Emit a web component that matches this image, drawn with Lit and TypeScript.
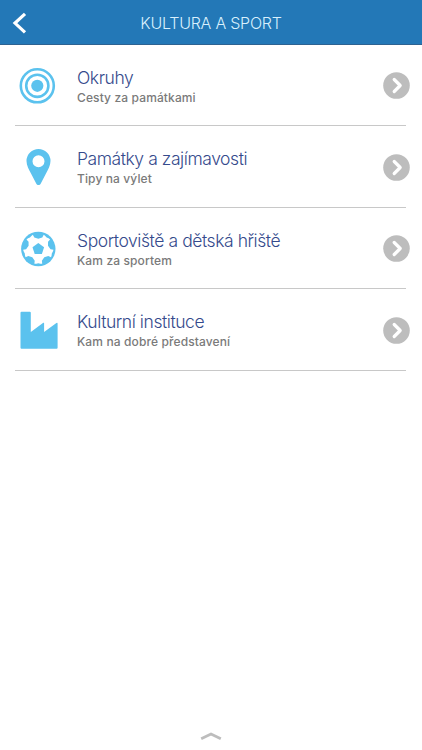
import { LitElement, html, css, svg } from "lit";
import { customElement } from "lit/decorators.js";

type Polar = [angle: number, radius: number];

// Repeats a set of polar points five times around a centre, first one pointing up.
const fivefold = (cx: number, cy: number, points: Polar[]) =>
  [0, 72, 144, 216, 288]
    .flatMap((turn) =>
      points.map(([angle, r]) => {
        const a = ((turn + angle - 90) * Math.PI) / 180;
        return `${(cx + r * Math.cos(a)).toFixed(2)},${(cy + r * Math.sin(a)).toFixed(2)}`;
      })
    )
    .join(" ");

const seams: Polar[] = [
  [0, 10.2], [19, 12.2], [21, 15.2], [28, 14.8], [36, 14.2],
  [44, 14.8], [51, 15.2], [53, 12.2],
];

const icons = {
  rings: svg`<g fill="none" stroke="#5bc2ee" stroke-width="2.6"><circle cx="19.3" cy="21.8" r="16.5"/><circle cx="19.3" cy="21.8" r="11.1"/></g><circle cx="19.3" cy="21.8" r="6.1" fill="#5bc2ee"/>`,
  pin: svg`<path fill="#5bc2ee" fill-rule="evenodd" d="M20.500 4.100a12 12 0 0 0-12 12c0 4.500 2.400 8.500 4.500 12.500l5.200 10c1 2 3.600 2 4.600 0l5.200-10c2.100-4 4.500-8 4.500-12.500a12 12 0 0 0-12-12zm0 6.200a6 6 0 1 1 0 12a6 6 0 0 1 0-12z"/>`,
  ball: svg`<circle cx="20.300" cy="22" r="17.200" fill="#5bc2ee"/>
    <polygon points="${fivefold(20.3, 22, seams)}" fill="#fff"/>
    <polygon points="${fivefold(20.3, 22.1, [[0, 6.1]])}" fill="#5bc2ee"/>`,
  factory: svg`<path fill="#5bc2ee" d="M3.500 3.800h8.300q1 0 1 1v19.300L25.300 14.800q.8-.5.8.5v8.800L38.400 15q1.200-.7 1.200.7v24q0 1-1 1H3.500q-1 0-1-1V4.800q0-1 1-1z"/>`,
};

const rows = [
  { icon: icons.rings, title: "Okruhy", sub: "Cesty za památkami" },
  { icon: icons.pin, title: "Památky a zajímavosti", sub: "Tipy na výlet" },
  { icon: icons.ball, title: "Sportoviště a dětská hřiště", sub: "Kam za sportem" },
  { icon: icons.factory, title: "Kulturní instituce", sub: "Kam na dobré představení" },
];

@customElement("app-root")
export class AppRoot extends LitElement {
  static styles = css`
    :host {
      display: flex;
      flex-direction: column;
      height: 100vh;
      background: #fff;
      font-family: Inter, "Liberation Sans", sans-serif;
    }
    * { box-sizing: border-box; }
    svg { display: block; }
    header {
      height: 45px;
      flex: none;
      display: grid;
      grid-template-columns: 40px 1fr 40px;
      align-items: center;
      background: #2378b7;
      border-bottom: 1px solid #2d6291;
      padding-top: 1px;
    }
    h1 {
      margin: 0;
      text-align: center;
      color: #d9f0fd;
      font-size: 16px;
      font-weight: 300;
      line-height: 20px;
      letter-spacing: -0.23px;
    }
    .list { flex: 1; margin-top: -0.4px; padding: 0 16px 0 15px; }
    .row {
      height: 81.5px;
      display: grid;
      grid-template-columns: 62px 1fr 27px;
      align-items: center;
      border-bottom: 1px solid #c8c8c8;
    }
    .icon { margin-left: 3px; }
    .go { margin: 1.4px 0 0 4px; overflow: visible; }
    .text { padding-top: 3px; }
    .title {
      color: #354a8c;
      font-size: 17.5px;
      font-weight: 300;
      line-height: 22px;
      letter-spacing: -0.43px;
      white-space: nowrap;
    }
    .sub {
      color: #7a7a7a;
      font-size: 12px;
      font-weight: 500;
      line-height: 17px;
      letter-spacing: 0.12px;
      white-space: nowrap;
    }
    footer { height: 20px; display: flex; justify-content: center; }
  `;

  render() {
    return html`
      <header>
        <svg width="40" height="44" viewBox="0 0 40 44"><path d="M25 12.800L15 22.100L25 31.400" fill="none" stroke="#fff" stroke-width="3.200"/></svg>
        <h1>KULTURA A SPORT</h1>
      </header>
      <main class="list">
        ${rows.map(
          (r) => html`<div class="row">
            <svg class="icon" width="42" height="42" viewBox="0 0 42 42">${r.icon}</svg>
            <div class="text">
              <div class="title">${r.title}</div>
              <div class="sub">${r.sub}</div>
            </div>
            <svg class="go" width="27" height="27" viewBox="0 0 27 27"><circle cx="13.500" cy="13.500" r="13.300" fill="#bdbdbd"/><path d="M11.200 7.500L17.200 13.500L11.200 19.500" fill="none" stroke="#fff" stroke-width="3.200" stroke-linecap="round" stroke-linejoin="round"/></svg>
          </div>`
        )}
      </main>
      <footer>
        <svg width="24" height="14" viewBox="0 0 24 14"><path d="M2.200 8.800L12 4L21.800 8.800" fill="none" stroke="#bdbdbd" stroke-width="2.800"/></svg>
      </footer>
    `;
  }
}
